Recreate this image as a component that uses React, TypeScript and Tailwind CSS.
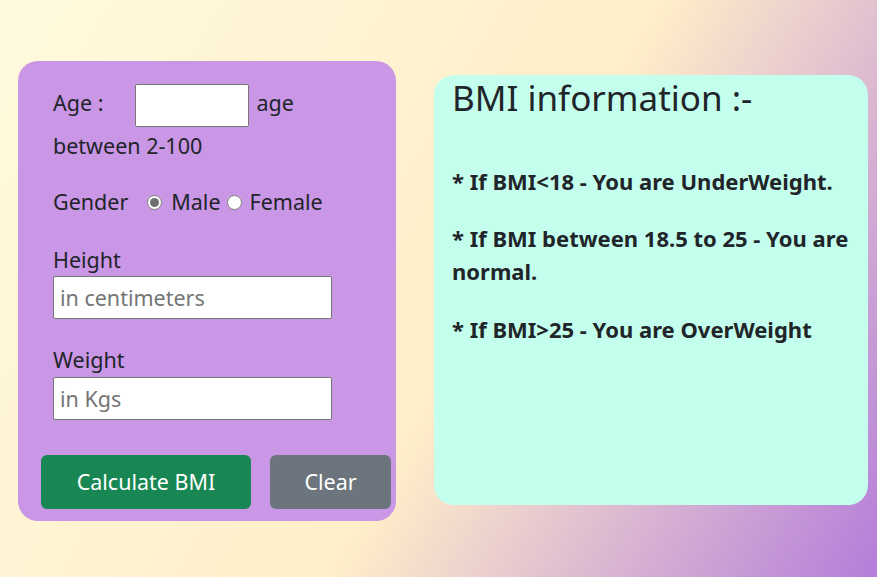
import { useState } from "react";

function BmiForm() {
  const [gender, setGender] = useState("male");

  return (
    <div className="w-[378px] mt-[61px] ml-[18px] shrink-0 rounded-[20px] bg-[#ca96e6] pt-[23px] pb-[12px] text-[21.5px] leading-[30px] text-[#212529]">
      <div className="px-[35px] leading-[38px]">
        <span>Age :</span>
        <input
          type="text"
          aria-label="Age"
          className="ml-[32px] mr-[7px] inline-block h-[43px] w-[114px] rounded-[2px] border border-[#767676] bg-white px-[6px] align-middle"
        />
        <span>age</span> <span>between 2-100</span>
      </div>

      <div className="mt-[22px] flex items-center px-[35px]">
        <span className="mr-[19px]">Gender</span>
        <label className="flex items-center">
          <input
            type="radio"
            name="gender"
            checked={gender === "male"}
            onChange={() => setGender("male")}
            className="mr-[9px] h-[15px] w-[15px] accent-[#707070]"
          />
          Male
        </label>
        <label className="ml-[6px] flex items-center">
          <input
            type="radio"
            name="gender"
            checked={gender === "female"}
            onChange={() => setGender("female")}
            className="mr-[8px] h-[15px] w-[15px] accent-[#707070]"
          />
          Female
        </label>
      </div>

      <div className="mt-[28px] px-[35px]">
        <div>Height</div>
        <input
          type="text"
          placeholder="in centimeters"
          className="mt-px block h-[43px] w-[279px] rounded-[2px] border border-[#767676] bg-white px-[6px] placeholder:text-[#757575]"
        />
      </div>

      <div className="mt-[26px] px-[35px]">
        <div>Weight</div>
        <input
          type="text"
          placeholder="in Kgs"
          className="mt-[2px] block h-[43px] w-[279px] rounded-[2px] border border-[#767676] bg-white px-[6px] placeholder:text-[#757575]"
        />
      </div>

      <div className="mt-[35px] flex gap-[19px] pl-[23px]">
        <button className="h-[54px] w-[210px] rounded-[6px] bg-[#198754] text-white">
          Calculate BMI
        </button>
        <button className="h-[54px] w-[121px] rounded-[6px] bg-[#6c757d] text-white">
          Clear
        </button>
      </div>
    </div>
  );
}

function BmiInfo() {
  return (
    <div className="mt-[75px] ml-[38px] h-[430px] w-[434px] shrink-0 rounded-[20px] bg-[#c4feec] px-[18px] text-[#212529]">
      <h2 className="text-[35px] leading-[46px]">BMI information :-</h2>
      <div className="mt-[44px] text-[22px] font-bold leading-[33px]">
        <p>* If BMI&lt;18 - You are UnderWeight.</p>
        <p className="mt-[24px]">* If BMI between 18.5 to 25 - You are normal.</p>
        <p className="mt-[25px]">* If BMI&gt;25 - You are OverWeight</p>
      </div>
    </div>
  );
}

export default function App() {
  return (
    <div className="flex min-h-[577px] w-full items-start bg-[linear-gradient(120deg,#fffade_0%,#ffeec9_55%,#b47dda_100%)] font-['Noto_Sans',sans-serif]">
      <BmiForm />
      <BmiInfo />
    </div>
  );
}
